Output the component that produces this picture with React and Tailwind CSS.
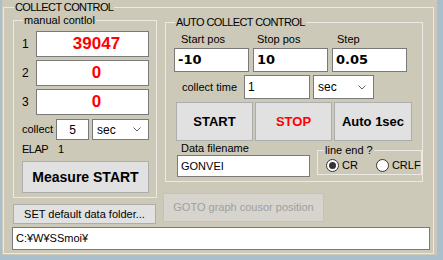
const field = "border border-[#7a7a7a] bg-white";
const btn = "flex items-center justify-center border border-[#adadad] bg-[#e1e1e1]";
const group = "border border-[#ebe9e1]";

function Chevron() {
  return (
    <svg width="8" height="5" viewBox="0 0 8 5" className="ml-auto mr-[7px]">
      <path d="M0.5 0.5 L4 4 L7.5 0.5" fill="none" stroke="#606060" strokeWidth="1" />
    </svg>
  );
}

function UnitSelect({ className = "" }) {
  return (
    <div className={`flex items-center ${field} ${className}`}>
      <span className="pl-[4px] text-[12px]">sec</span>
      <Chevron />
    </div>
  );
}

function Radio({ checked, label }) {
  return (
    <div className="flex items-center">
      <span className="flex h-[13px] w-[13px] items-center justify-center rounded-full border border-[#333] bg-white">
        {checked && <span className="h-[7px] w-[7px] rounded-full bg-[#333]" />}
      </span>
      <span className="ml-[3px] text-[11px] leading-[13px]">{label}</span>
    </div>
  );
}

const counters = [
  { id: 1, value: "39047" },
  { id: 2, value: "0" },
  { id: 3, value: "0" },
];

const positions = [
  { label: "Start pos", value: "-10", pad: "pl-[7px]" },
  { label: "Stop pos", value: "10", pad: "pl-[4px]" },
  { label: "Step", value: "0.05", pad: "pl-[5px]" },
];

export default function App() {
  return (
    <div className="flex h-[260px] w-[443px] pb-[5px] pl-[2px] pr-[6px] bg-[#a9bfcd] font-['Liberation_Sans',Arial,sans-serif] text-[11px] text-black">
      <div className="flex-1 bg-[#ccc9b9]">
        <fieldset className={`ml-[1px] mr-[3px] h-[254px] pl-[8px] pr-[3px] pb-[3px] ${group}`}>
          <legend className="ml-[2px] px-[1px] leading-[14px] tracking-[-0.6px]">COLLECT CONTROL</legend>

          <div className="flex">
            {/* left column */}
            <div className="w-[151px]">
              <fieldset className={`ml-[1px] w-[144px] pl-[8px] pr-[7px] pb-[4px] ${group}`}>
                <legend className="ml-[1px] px-[1px] leading-[13px]">manual contlol</legend>
                <div className="mt-[4px] flex flex-col gap-[3px]">
                  {counters.map((c) => (
                    <div key={c.id} className="flex items-center">
                      <span className="w-[14px] text-[12px]">{c.id}</span>
                      <div className={`flex h-[26px] w-[113px] items-center justify-center pl-[8px] ${field}`}>
                        <span className="text-[17px] font-bold text-[#ff0000]">{c.value}</span>
                      </div>
                    </div>
                  ))}
                </div>
                <div className="mt-[4px] flex h-[21px] items-center">
                  <span className="w-[34px] text-[11px]">collect</span>
                  <div className={`flex h-[21px] w-[33px] items-center justify-center text-[12px] ${field}`}>5</div>
                  <UnitSelect className="ml-[3px] h-[21px] w-[57px]" />
                </div>
                <div className="mt-[3px] flex h-[13px] items-center leading-[13px]">
                  <span className="w-[36px] tracking-[-0.5px]">ELAP</span>
                  <span>1</span>
                </div>
                <button className={`mt-[5px] h-[32px] w-[127px] text-[14px] font-bold ${btn}`}>Measure START</button>
              </fieldset>
              <button className={`ml-[1px] mt-[6px] h-[20px] w-[143px] text-[11px] ${btn}`}>SET default data folder...</button>
            </div>

            {/* right column */}
            <div className="flex-1">
              <fieldset className={`ml-[2px] mt-[2px] w-[257px] pl-[8px] pb-[4px] ${group}`}>
                <legend className="ml-[1px] px-[1px] leading-[13px] tracking-[-0.6px]">AUTO COLLECT CONTROL</legend>
                <div className="mt-[4px] flex gap-[4px]">
                  {positions.map((p) => (
                    <div key={p.label} className="w-[75px]">
                      <div className={`h-[15px] text-[11px] leading-[13px] ${p.pad}`}>{p.label}</div>
                      <div className={`flex h-[24px] items-center pl-[3px] text-[13px] font-bold font-['DejaVu_Sans',sans-serif] ${field}`}>
                        {p.value}
                      </div>
                    </div>
                  ))}
                </div>
                <div className="mt-[3px] flex h-[24px] items-center">
                  <span className="ml-[8px] w-[62px] text-[11px]">collect time</span>
                  <div className={`flex h-[24px] w-[66px] items-center pl-[3px] text-[12px] ${field}`}>1</div>
                  <UnitSelect className="ml-[3px] h-[24px] w-[61px]" />
                </div>
                <div className="ml-[2px] mt-[3px] flex h-[39px] gap-[2px]">
                  <button className={`w-[77px] text-[13px] font-bold ${btn}`}>START</button>
                  <button className={`w-[77px] text-[13px] font-bold text-[#ff0000] ${btn}`}>STOP</button>
                  <button className={`w-[78px] text-[13px] font-bold ${btn}`}>Auto 1sec</button>
                </div>
                <div className="flex items-start">
                  <div className="ml-[3px] w-[133px]">
                    <div className="mt-[1px] h-[13px] pl-[4px] text-[11px] leading-[13px]">Data filename</div>
                    <div className={`flex h-[22px] items-center pl-[3px] text-[11px] ${field}`}>GONVEI</div>
                  </div>
                  <fieldset className={`ml-[7px] mt-[3px] w-[98px] pl-[5px] pb-[2px] ${group}`}>
                    <legend className="ml-[1px] px-[1px] text-[11px] leading-[13px]">line end ?</legend>
                    <div className="ml-[3px] mt-[2px] flex gap-[18px]">
                      <Radio checked label="CR" />
                      <Radio label="CRLF" />
                    </div>
                  </fieldset>
                </div>
              </fieldset>
              <button className="mt-[11px] flex h-[29px] w-[161px] items-center justify-center border border-[#c4c2ba] bg-[#d6d4cd] text-[11px] text-[#a0a0a0]">
                GOTO graph cousor position
              </button>
            </div>
          </div>

          <div className={`mt-[3px] flex h-[23px] items-center pl-[3px] text-[11px] ${field}`}>C:¥W¥SSmoi¥</div>
        </fieldset>
      </div>
    </div>
  );
}
